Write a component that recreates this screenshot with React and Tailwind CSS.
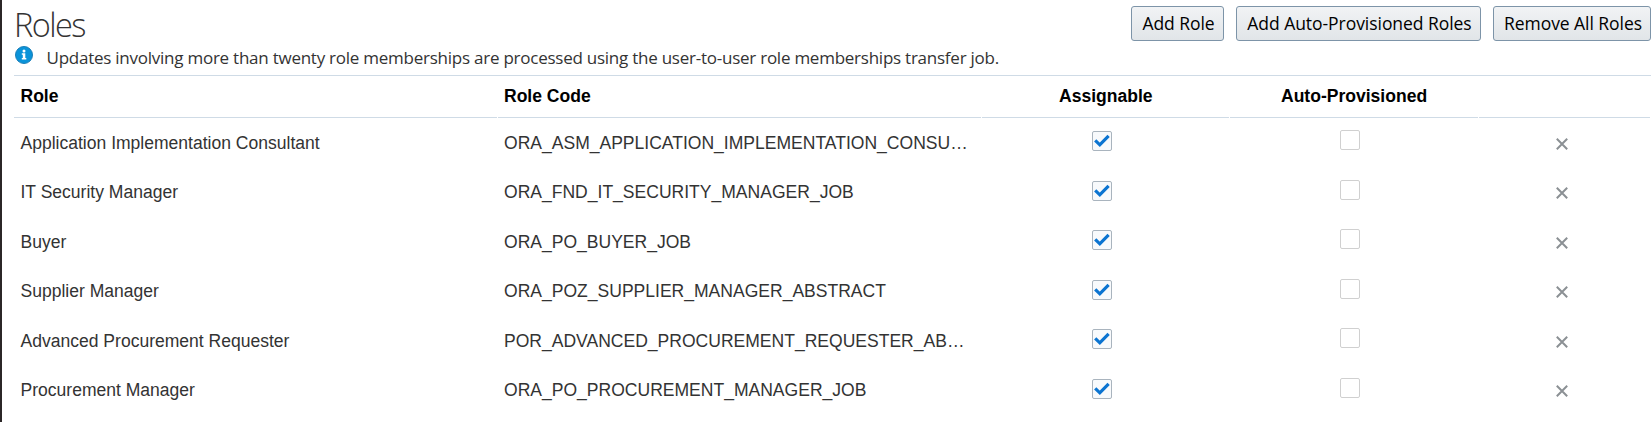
import React from 'react';

const GRID = 'grid grid-cols-[483px_483px_247px_248px_171px] gap-x-px';

const COLUMNS = [
  {name: 'Role', customClass: 'pl-[6.5px]'},
  {name: 'Role Code', customClass: 'pl-1.5'},
  {name: 'Assignable', customClass: 'pl-[77px]'},
  {name: 'Auto-Provisioned', customClass: 'pl-[51px]'},
  {name: '', customClass: ''},
];

const ROLES = [
  {name: 'Application Implementation Consultant', code: 'ORA_ASM_APPLICATION_IMPLEMENTATION_CONSU…'},
  {name: 'IT Security Manager', code: 'ORA_FND_IT_SECURITY_MANAGER_JOB'},
  {name: 'Buyer', code: 'ORA_PO_BUYER_JOB'},
  {name: 'Supplier Manager', code: 'ORA_POZ_SUPPLIER_MANAGER_ABSTRACT'},
  {name: 'Advanced Procurement Requester', code: 'POR_ADVANCED_PROCUREMENT_REQUESTER_AB…'},
  {name: 'Procurement Manager', code: 'ORA_PO_PROCUREMENT_MANAGER_JOB'},
];

function ActionButton({customClass, children}) {
  return (<button
    type="button"
    className={`h-[35px] shrink-0 rounded-[3px] border border-[#7d94a8] bg-linear-to-b from-[#f1f3f5] to-[#e1e5e8] pt-px pl-0.5 text-center text-[17.5px] leading-none tracking-[-0.05px] whitespace-nowrap text-black ${customClass}`}
  >
    {children}
  </button>);
}

function InfoIcon() {
  return (<svg className="size-[18px] shrink-0" viewBox="0 0 18 18">
    <circle cx="9" cy="9" r="8.5" fill="#0a93d9" stroke="#1b7fb8" strokeWidth="1"/>
    <circle cx="9" cy="5" r="1.5" fill="#fff"/>
    <path d="M6.8 7.3h3.5v4.6h1v1.5H6.8v-1.5h1V8.8h-1z" fill="#fff"/>
  </svg>);
}

function Checkbox({checked}) {
  if (!checked) {
    return <div className="size-5 rounded-[2px] border border-[#d0d0d0] bg-white"/>;
  }
  return (<div className="size-5 rounded-[2px] border border-[#a9b4be] bg-[#f8fafc]">
    <svg className="size-[18px]" viewBox="0 0 18 18" fill="none" stroke="#0b74d1" strokeWidth="3.2">
      <path d="M2.2 8.4L6.8 12.8L15.6 3.8"/>
    </svg>
  </div>);
}

function RemoveIcon() {
  return (<svg className="size-3" viewBox="0 0 12 12" fill="none" stroke="#8b9094" strokeWidth="2">
    <path d="M0.8 0.8L11.2 11.2M11.2 0.8L0.8 11.2"/>
  </svg>);
}

function RoleRow({name, code}) {
  return (<div className={`${GRID} h-[49.45px] text-[17.55px] leading-[50px] text-[#333]`}>
    <div className="truncate pl-[6.5px]">{name}</div>
    <div className="truncate pl-1.5">{code}</div>
    <div className="pt-[13.4px] pl-[110px]"><Checkbox checked/></div>
    <div className="pt-[12.4px] pl-[110px]"><Checkbox/></div>
    <div className="pt-5 pl-[77px]"><RemoveIcon/></div>
  </div>);
}

export default function App() {
  return (<div className="h-[422px] overflow-hidden border-l-2 border-[#2b2627] bg-white pl-3 font-['Liberation_Sans',Arial,sans-serif]">
    <div className="flex h-[75px] justify-between font-['Open_Sans','Segoe_UI',sans-serif]">
      <div>
        <h1 className="h-[46px] pt-[5px] text-[32.5px] leading-10 font-light tracking-[-1.6px] text-[#333]">Roles</h1>
        <div className="flex pl-px">
          <InfoIcon/>
          <p className="ml-[13.5px] text-[17px] leading-6 tracking-[-0.245px] whitespace-nowrap text-[#333]">
            Updates involving more than twenty role memberships are processed using the user-to-user role memberships transfer job.
          </p>
        </div>
      </div>
      <div className="flex gap-3 pt-1.5">
        <ActionButton customClass="w-[93px]">Add Role</ActionButton>
        <ActionButton customClass="w-[245px]">Add Auto-Provisioned Roles</ActionButton>
        <ActionButton customClass="w-[158px]">Remove All Roles</ActionButton>
      </div>
    </div>
    <div className="h-px bg-[#cfdbe6]"/>
    <div className={`${GRID} h-[42px] text-[17.55px] leading-[41px] font-bold text-black`}>
      {COLUMNS.map(({name, customClass}, i) => (
        <div key={i} className={`border-b border-[#cfdbe6] ${customClass}`}>{name}</div>
      ))}
    </div>
    {ROLES.map((role) => <RoleRow key={role.code} {...role}/>)}
  </div>);
}
